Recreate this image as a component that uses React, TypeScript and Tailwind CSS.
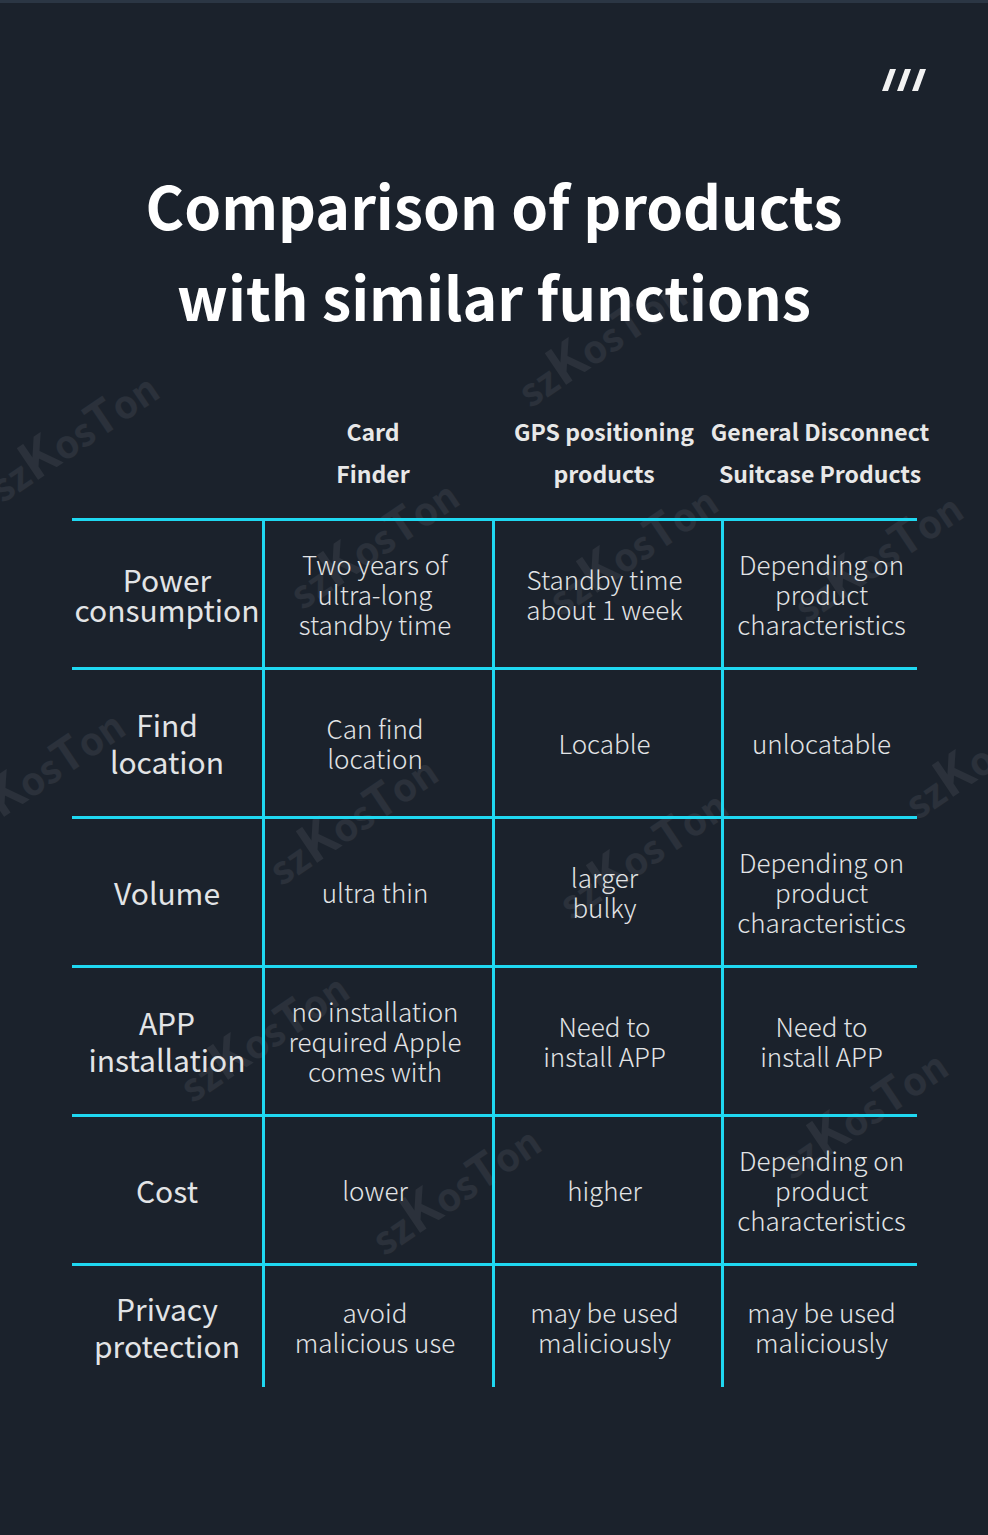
import React from "react";

const font = { fontFamily: '"Noto Sans CJK SC", "Noto Sans", sans-serif' };

type Row = { label: string[]; cells: string[][]; labelLeading?: string; h?: string };

const rows: Row[] = [
  {
    label: ["Power", "consumption"],
    labelLeading: "leading-[30px]",
    cells: [["Two years of", "ultra-long", "standby time"], ["Standby time", "about 1 week"], ["Depending on", "product", "characteristics"]],
  },
  { label: ["Find", "location"], cells: [["Can find", "location"], ["Locable"], ["unlocatable"]] },
  { label: ["Volume"], cells: [["ultra thin"], ["larger", "bulky"], ["Depending on", "product", "characteristics"]] },
  {
    label: ["APP", "installation"],
    cells: [["no installation", "required Apple", "comes with"], ["Need to", "install APP"], ["Need to", "install APP"]],
  },
  { label: ["Cost"], cells: [["lower"], ["higher"], ["Depending on", "product", "characteristics"]] },
  {
    label: ["Privacy", "protection"],
    h: "h-[124px]",
    cells: [["avoid", "malicious use"], ["may be used", "maliciously"], ["may be used", "maliciously"]],
  },
];

// start points (lower-left end) of the "szKosTon" watermarks
const marks = [
  [-8, 490],
  [520, 395],
  [292, 597],
  [551, 603],
  [796, 610],
  [-42, 827],
  [271, 873],
  [561, 907],
  [907, 807],
  [182, 1090],
  [374, 1243],
  [781, 1167],
];

function Watermark({ x, y }: { x: number; y: number }) {
  return (
    <div
      className="pointer-events-none absolute origin-left -rotate-[34deg] whitespace-nowrap text-[38px] font-bold leading-[40px] text-white/[0.07]"
      style={{ left: x, top: y - 28, ...font }}
    >
      sz<span className="text-[1.35em]">K</span>os<span className="text-[1.2em]">T</span>on
    </div>
  );
}

export default function App() {
  return (
    <div className="relative h-[1535px] w-[988px] overflow-hidden border-t-[3px] border-[#2b3644] bg-[#1b222c] text-[#e2e4e6]" style={font}>
      {marks.map(([x, y], i) => (
        <Watermark key={i} x={x} y={y} />
      ))}

      <div className="relative flex justify-end pr-[62px] pt-[66px]">
        <svg width="44" height="22" viewBox="0 0 44 22" fill="#f2f2f2">
          <polygon points="8,0 14,0 6,22 0,22" />
          <polygon points="23,0 29,0 21,22 15,22" />
          <polygon points="38,0 44,0 36,22 30,22" />
        </svg>
      </div>

      <h1 className="relative mt-[68px] text-center text-[59px] font-bold leading-[91px] text-white">
        Comparison of products
        <br />
        with similar functions
      </h1>

      <div className="relative ml-[72px] mt-[69px] flex w-[845px] text-[23px] font-bold leading-[42px] text-[#e8e8e8]">
        <div className="w-[191px]" />
        <div className="flex w-[220px] flex-col items-center whitespace-nowrap">
          <span>Card</span>
          <span>Finder</span>
        </div>
        <div className="flex w-[242px] flex-col items-center whitespace-nowrap">
          <span>GPS positioning</span>
          <span>products</span>
        </div>
        <div className="flex w-[190px] flex-col items-center whitespace-nowrap">
          <span>General Disconnect</span>
          <span>Suitcase Products</span>
        </div>
      </div>

      <div className="relative ml-[72px] mt-[24px] w-[845px]">
        {rows.map((r, i) => (
          <div
            key={i}
            className={`grid grid-cols-[190px_230px_229px_196px] border-t-[3px] border-[#1fd8f1] ${r.h ?? "h-[149px]"}`}
          >
            <div className={`flex items-center justify-center text-center text-[30px] ${r.labelLeading ?? "leading-[37px]"}`}>
              <div>
                {r.label.map((l) => (
                  <div key={l}>{l}</div>
                ))}
              </div>
            </div>
            {r.cells.map((c, j) => (
              <div
                key={j}
                className={`flex items-center justify-center border-l-[3px] border-[#1fd8f1] text-center text-[26px] font-light leading-[30px] ${
                  j < 2 ? "pr-[7px]" : "pl-[2px]"
                }`}
              >
                <div>
                  {c.map((l) => (
                    <div key={l}>{l}</div>
                  ))}
                </div>
              </div>
            ))}
          </div>
        ))}
      </div>
    </div>
  );
}
